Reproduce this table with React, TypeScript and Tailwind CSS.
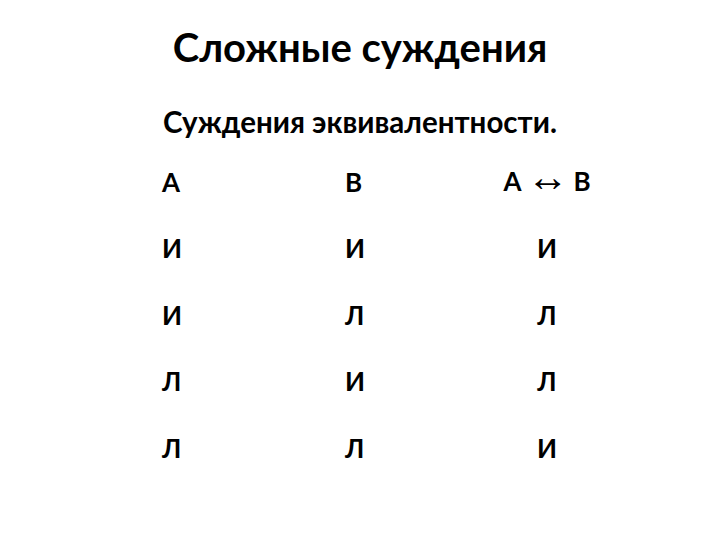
const ROWS: [string, string, string][] = [
  ['И', 'И', 'И'],
  ['И', 'Л', 'Л'],
  ['Л', 'И', 'Л'],
  ['Л', 'Л', 'И'],
];

export default function App() {
  return (
    <div
      className="w-[720px] h-[540px] bg-white text-black font-bold flex flex-col items-center"
      style={{ fontFamily: 'Lato, "Open Sans", sans-serif' }}
    >
      <h1 className="mt-[23px] text-[40px] leading-[48px]">Сложные суждения</h1>
      <h2 className="mt-[31px] text-[29.5px] leading-[40px]">Суждения эквивалентности.</h2>

      <div className="mt-[7px] self-start ml-[162px] grid grid-cols-[183px_147px_110px] auto-rows-[66.5px] items-center text-[26px]">
        <div>А</div>
        <div>В</div>
        <div className="flex items-baseline justify-center gap-[5px] leading-[36px] mb-[6px]">
          <span>А</span>
          <span
            className="font-normal text-[42px] leading-[36px]"
            style={{ fontFamily: '"Liberation Serif", serif' }}
          >
            ↔
          </span>
          <span>В</span>
        </div>
        {ROWS.map((r, i) => (
          <div key={i} className="contents">
            <div>{r[0]}</div>
            <div>{r[1]}</div>
            <div className="text-center">{r[2]}</div>
          </div>
        ))}
      </div>
    </div>
  );
}
